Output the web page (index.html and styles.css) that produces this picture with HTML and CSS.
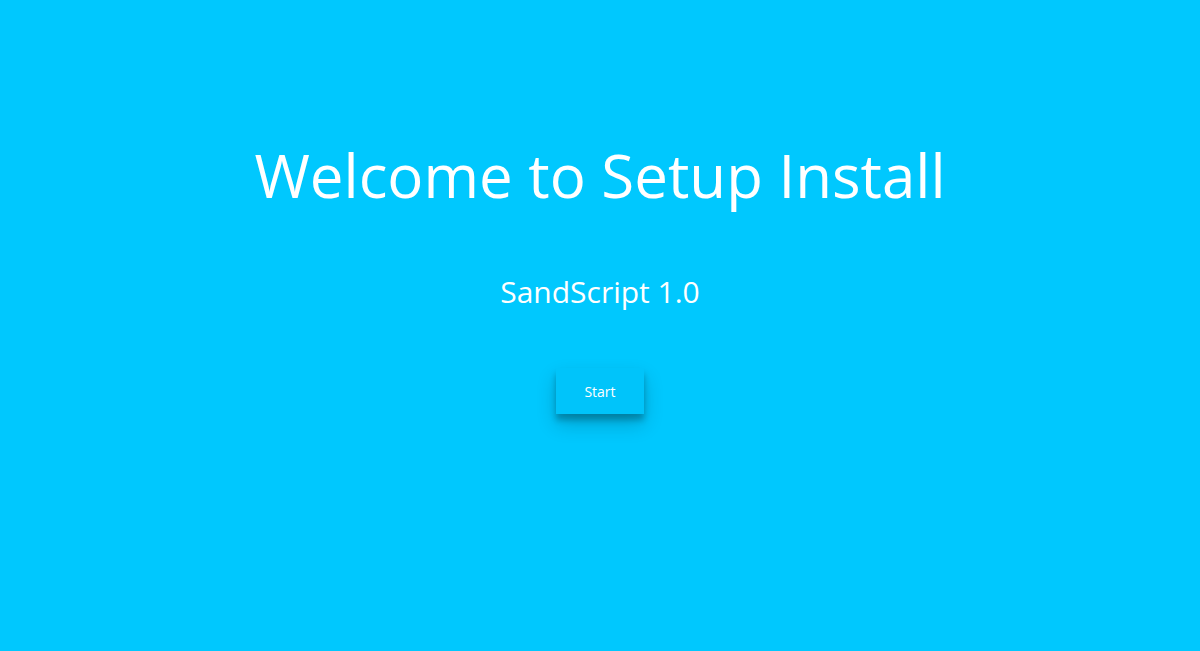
FILE: index.html
```html
<!DOCTYPE html>
<html lang="en">
<head>
<meta charset="utf-8">
<title>Setup</title>
<link rel="stylesheet" href="styles.css">
</head>
<body>
<main class="welcome">
  <h1 class="title">Welcome to Setup Install</h1>
  <p class="subtitle">SandScript 1.0</p>
  <button class="start-btn" type="button">Start</button>
</main>
</body>
</html>
```

FILE: styles.css
```css
html, body {
  margin: 0;
  padding: 0;
  height: 100%;
}
body {
  background: #00c8fe;
  font-family: "Open Sans", "Noto Sans", sans-serif;
  color: #ffffff;
}
.welcome {
  display: flex;
  flex-direction: column;
  align-items: center;
  padding-top: 134px;
}
.title {
  margin: 0;
  font-size: 60px;
  font-weight: 400;
  line-height: 82px;
}
.subtitle {
  margin: 55px 0 0;
  font-size: 30px;
  line-height: 41px;
}
.start-btn {
  margin-top: 56px;
  width: 88px;
  height: 46px;
  border: none;
  background: #00c4fa;
  color: #ffffff;
  font-family: "Open Sans", "Noto Sans", sans-serif;
  font-size: 14px;
  box-shadow: 0 10px 20px rgba(0, 0, 0, 0.19), 0 6px 6px rgba(0, 0, 0, 0.23);
  cursor: pointer;
}
```
